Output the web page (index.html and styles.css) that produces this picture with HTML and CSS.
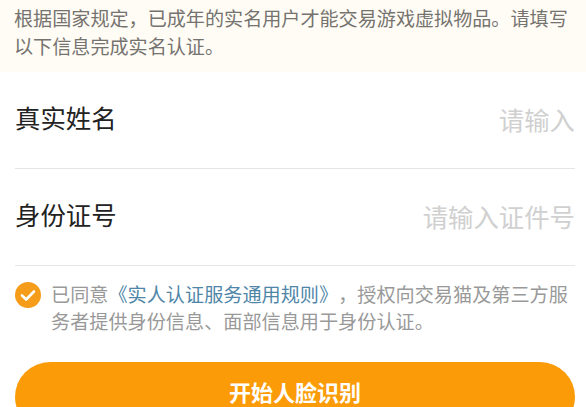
FILE: index.html
```html
<!DOCTYPE html>
<html>
  <head>
    <meta charset="UTF-8" />
    <title>实名认证</title>
    <link rel="stylesheet" href="styles.css">
  </head>
  <body>
    <div class="notice">根据国家规定，已成年的实名用户才能交易游戏虚拟物品。请填写以下信息完成实名认证。</div>

    <div class="form">
      <div class="row">
        <span class="label">真实姓名</span>
        <span class="placeholder">请输入</span>
      </div>
      <div class="row">
        <span class="label">身份证号</span>
        <span class="placeholder">请输入证件号</span>
      </div>
    </div>

    <div class="agree">
      <svg class="check" width="26" height="26" viewBox="0 0 26 26">
        <circle cx="13" cy="13" r="13" fill="#f59c1a" />
        <path d="M7 13.5l4.2 4L19 9.5" fill="none" stroke="#fff" stroke-width="2.6" stroke-linecap="round" stroke-linejoin="round" />
      </svg>
      <p>已同意<a class="rule">《实人认证服务通用规则》</a>，授权向交易猫及第三方服务者提供身份信息、面部信息用于身份认证。</p>
    </div>

    <button class="start">开始人脸识别</button>
  </body>
</html>
```

FILE: styles.css
```css
* {
  margin: 0;
  padding: 0;
  box-sizing: border-box;
}

body {
  width: 586px;
  height: 407px;
  overflow: hidden;
  background-color: #fff;
  font-family: "Noto Sans CJK SC", sans-serif;
  text-spacing-trim: space-all;
}

.notice {
  height: 72px;
  padding: 4px 14px 0;
  background-color: #fffcf5;
  color: #75736f;
  font-size: 19.1px;
  line-height: 28px;
}

.form {
  margin: 0 11px 0 15px;
}

.row {
  height: 97px;
  padding-bottom: 6px;
  border-bottom: 1px solid #e6e6e6;
  display: flex;
  align-items: center;
  justify-content: space-between;
}

.label {
  font-size: 25.4px;
  color: #222;
}

.placeholder {
  margin-top: 4px;
  font-size: 25.4px;
  color: #d0d0d0;
}

.agree {
  display: flex;
  gap: 10px;
  margin: 0 9px 0 15px;
  padding-top: 15px;
}

.check {
  flex: none;
  margin-top: 1px;
}

.agree p {
  font-size: 19.15px;
  line-height: 27px;
  color: #999;
}

.rule {
  color: #4f86a8;
}

.start {
  display: block;
  width: 560px;
  height: 70px;
  margin: 27px 0 0 15px;
  padding-bottom: 13px;
  border: none;
  border-radius: 35px;
  background-color: #fb9b07;
  color: #fff;
  font-family: inherit;
  font-size: 22px;
  font-weight: bold;
}
```
